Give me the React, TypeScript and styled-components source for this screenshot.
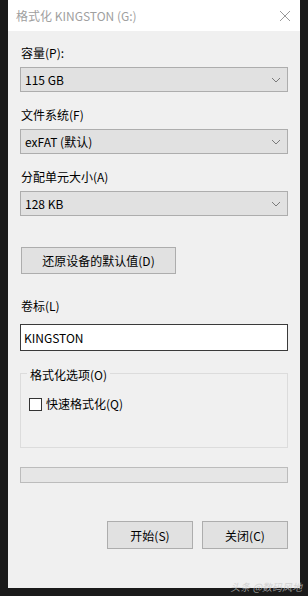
import React from 'react';
import styled, { createGlobalStyle } from 'styled-components';

const font = `"Noto Sans CJK SC", "Liberation Sans", sans-serif`;

const Global = createGlobalStyle`
    html, body {
        margin: 0;
        padding: 0;
        background: #1a1a1a;
    }
    body {
        font-family: ${font};
        font-size: 12px;
        color: #000;
    }
`;

const Chevron = () => (
    <svg width="10" height="6" viewBox="0 0 10 6">
        <path d="M1 1 L5 5 L9 1" fill="none" stroke="#7a7a7a" strokeWidth="1" />
    </svg>
);

const CloseIcon = () => (
    <svg width="12" height="12" viewBox="0 0 12 12">
        <path d="M1 1 L11 11 M11 1 L1 11" stroke="#9a9a9a" strokeWidth="1" />
    </svg>
);

interface FieldProps {
    label: string;
    value: string;
}
const SelectField: React.FC<FieldProps> = ({ label, value }) => (
    <Field>
        <Label>{label}</Label>
        <Select>
            <span>{value}</span>
            <Chevron />
        </Select>
    </Field>
);

const App: React.FC = () => (
    <Screen>
        <Global />
        <Window>
            <TitleBar>
                <Title>格式化 KINGSTON (G:)</Title>
                <CloseIcon />
            </TitleBar>
            <Body>
                <SelectField label="容量(P):" value="115 GB" />
                <SelectField label="文件系统(F)" value="exFAT (默认)" />
                <SelectField label="分配单元大小(A)" value="128 KB" />
                <RestoreButton>还原设备的默认值(D)</RestoreButton>
                <VolumeField>
                    <Label>卷标(L)</Label>
                    <TextBox>KINGSTON</TextBox>
                </VolumeField>
                <Group>
                    <Legend>格式化选项(O)</Legend>
                    <CheckRow>
                        <CheckBox />
                        <span>快速格式化(Q)</span>
                    </CheckRow>
                </Group>
                <Progress />
                <Actions>
                    <Button>开始(S)</Button>
                    <Button>关闭(C)</Button>
                </Actions>
            </Body>
        </Window>
        <Watermark>头条 @数码风地</Watermark>
    </Screen>
);

export default App;

const Screen = styled.div`
    position: relative;
    width: 308px;
    height: 596px;
    overflow: hidden;
    background: #1a1a1a;
`;

const Window = styled.div`
    margin-left: 8px;
    width: 292px;
    height: 588px;
    background: #f0f0f0;
    display: flex;
    flex-direction: column;
`;

const TitleBar = styled.div`
    height: 31px;
    background: #fff;
    display: flex;
    align-items: center;
    justify-content: space-between;
    padding: 0 9px 0 8px;
    flex-shrink: 0;
`;

const Title = styled.div`
    color: #a0a0a0;
    font-size: 12px;
    line-height: 16px;
`;

const Body = styled.div`
    display: flex;
    flex-direction: column;
    padding: 14px 12px 0 12px;
`;

const Field = styled.div`
    display: flex;
    flex-direction: column;
    & + & {
        margin-top: 15px;
    }
`;

const Label = styled.div`
    height: 16px;
    line-height: 16px;
    margin-bottom: 6px;
    padding-left: 1px;
`;

const Select = styled.div`
    box-sizing: border-box;
    height: 25px;
    background: #e1e1e1;
    border: 1px solid #adadad;
    display: flex;
    align-items: center;
    justify-content: space-between;
    padding: 0 6px 0 4px;
`;

const RestoreButton = styled.div`
    box-sizing: border-box;
    margin-top: 31px;
    margin-left: 1px;
    width: 155px;
    height: 27px;
    background: #e1e1e1;
    border: 1px solid #adadad;
    display: flex;
    align-items: center;
    justify-content: center;
`;

const VolumeField = styled.div`
    display: flex;
    flex-direction: column;
    margin-top: 24px;
    ${Label} {
        margin-bottom: 10px;
    }
`;

const TextBox = styled.div`
    box-sizing: border-box;
    height: 27px;
    background: #fff;
    border: 1px solid #3a3a3a;
    display: flex;
    align-items: center;
    padding-left: 3px;
`;

const Group = styled.div`
    position: relative;
    box-sizing: border-box;
    margin-top: 22px;
    height: 75px;
    border: 1px solid #dcdcdc;
    padding: 22px 8px 0 8px;
`;

const Legend = styled.div`
    position: absolute;
    top: -7px;
    left: 6px;
    padding: 0 3px;
    background: #f0f0f0;
    line-height: 16px;
`;

const CheckRow = styled.div`
    display: flex;
    align-items: center;
    gap: 4px;
    line-height: 16px;
`;

const CheckBox = styled.div`
    box-sizing: border-box;
    width: 13px;
    height: 13px;
    background: #fff;
    border: 1px solid #333;
`;

const Progress = styled.div`
    box-sizing: border-box;
    margin-top: 19px;
    height: 16px;
    background: #e6e6e6;
    border: 1px solid #bcbcbc;
`;

const Actions = styled.div`
    display: flex;
    justify-content: flex-end;
    gap: 9px;
    margin-top: 38px;
`;

const Button = styled.div`
    box-sizing: border-box;
    width: 86px;
    height: 28px;
    background: #e1e1e1;
    border: 1px solid #adadad;
    display: flex;
    align-items: center;
    justify-content: center;
`;

const Watermark = styled.div`
    position: absolute;
    right: 6px;
    bottom: 3px;
    font-size: 10px;
    line-height: 12px;
    color: rgba(200, 200, 200, 0.75);
    font-style: italic;
`;
